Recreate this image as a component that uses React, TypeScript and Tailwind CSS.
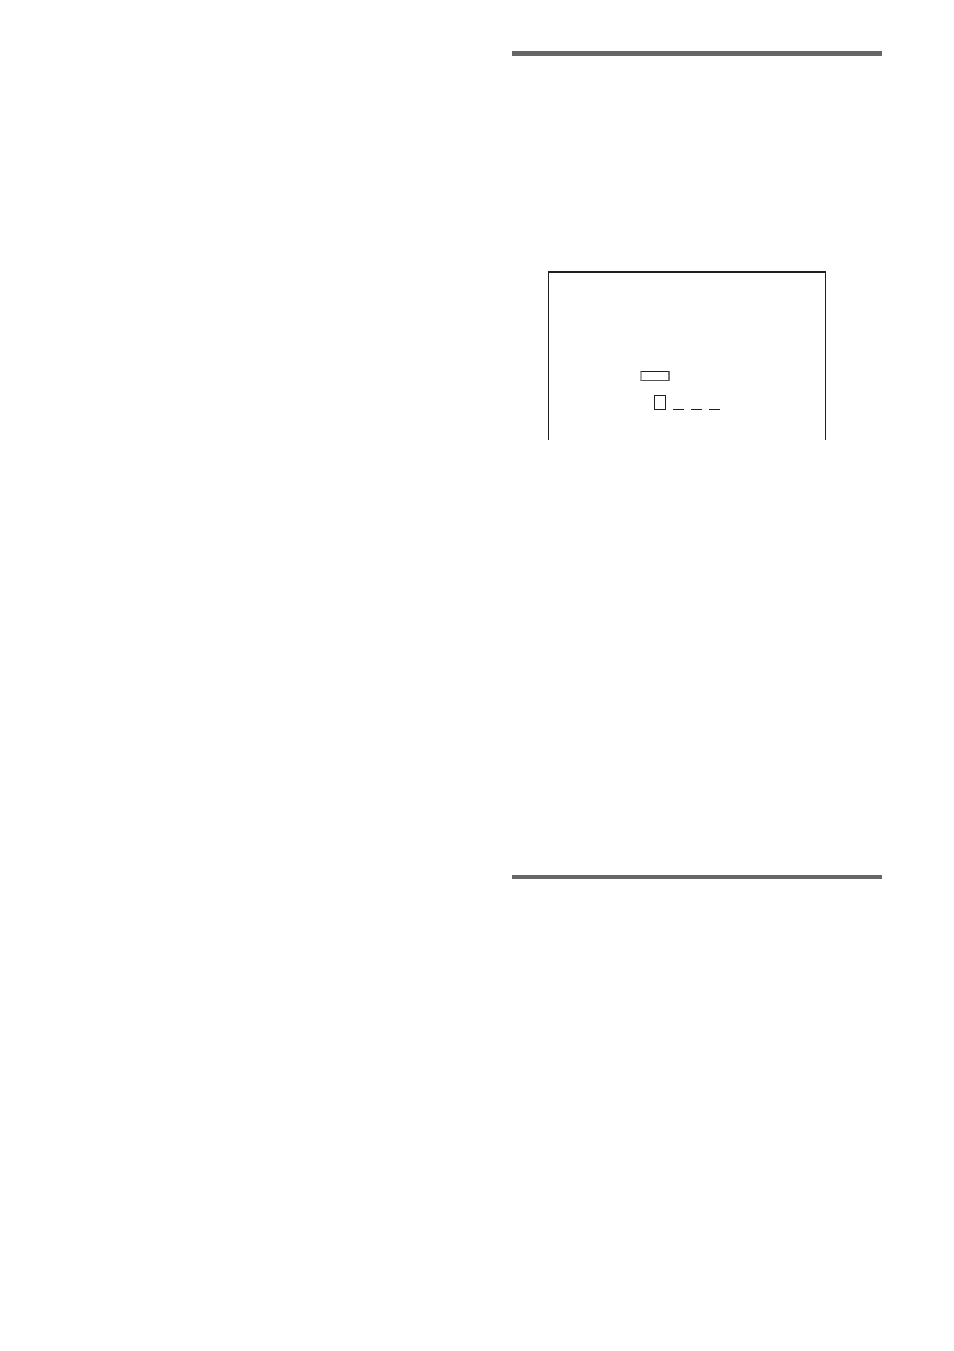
type DigitSlot = {
  label: string;
  active: boolean;
};

const DIGIT_SLOTS: DigitSlot[] = [
  { label: 'Digit 1', active: true },
  { label: 'Digit 2', active: false },
  { label: 'Digit 3', active: false },
  { label: 'Digit 4', active: false },
];

function DigitInput({ label, active }: DigitSlot) {
  return (
    <input
      type="text"
      inputMode="numeric"
      maxLength={1}
      aria-label={label}
      className={
        active
          ? 'h-[15px] w-3 border border-[#231f20] text-center text-xs outline-none'
          : 'h-[15px] w-[11px] border-b border-[#231f20] text-center text-xs outline-none'
      }
    />
  );
}

function CodeScreen() {
  return (
    <div className="mr-14 ml-9 h-[169px] border-x border-t-2 border-[#231f20] pt-[98px]">
      {/* key */}
      <div className="ml-[91px] h-2.5 w-[30px] rounded-[1px] border-x-2 border-y border-t-[#231f20] border-r-[#777777] border-b-[#555555] border-l-[#aaaaaa]" />

      {/* code entry */}
      <div className="mt-3.5 ml-[105px] flex gap-[7px]">
        {DIGIT_SLOTS.map((slot) => (
          <DigitInput key={slot.label} {...slot} />
        ))}
      </div>
    </div>
  );
}

export default function App() {
  return (
    <main className="grid min-h-screen grid-cols-2 gap-[70px] bg-white px-[72px] pt-[51px] font-['Liberation_Sans',sans-serif] text-[#231f20]">
      <div />

      <div>
        <section className="h-[824px] border-t-[5px] border-[#666666] pt-[215px]">
          <CodeScreen />
        </section>
        <section className="border-t-4 border-[#666666]" />
      </div>
    </main>
  );
}
